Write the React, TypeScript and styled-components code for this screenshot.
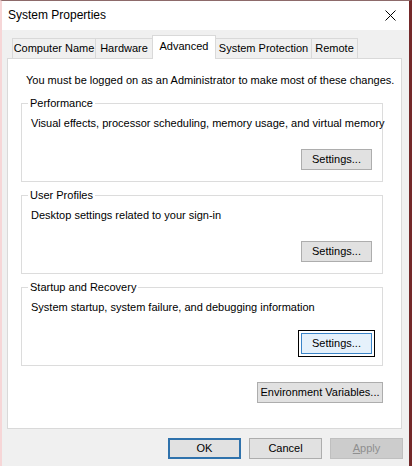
import React from 'react';
import styled, { createGlobalStyle, css } from 'styled-components';

const GlobalStyle = createGlobalStyle`
  html, body {
    margin: 0;
    padding: 0;
    background: #f0f0f0;
  }
  body {
    font-family: 'Segoe UI', 'Liberation Sans', Arial, sans-serif;
    font-size: 11px;
    color: #000;
    white-space: nowrap;
  }
`;

const Window = styled.div`
  width: 412px;
  height: 466px;
  box-sizing: border-box;
  display: flex;
  flex-direction: column;
  background: #f0f0f0;
  border-top: 1px solid #8d6a6a;
  border-left: 2px solid #f6d6d7;
  border-right: 3px solid #74292a;
`;

const TitleBar = styled.div`
  height: 29px;
  flex: none;
  display: flex;
  align-items: center;
  justify-content: space-between;
  padding: 0 13px 0 6px;
  background: #fff;
`;

const Title = styled.span`
  font-size: 12px;
  line-height: 15px;
`;

const CloseIcon = () => (
  <svg width="11" height="11" viewBox="0 0 11 11">
    <path d="M0.5 0.5 L10.5 10.5 M10.5 0.5 L0.5 10.5" stroke="#000" strokeWidth="1" fill="none" />
  </svg>
);

const TabRow = styled.div`
  display: flex;
  align-items: flex-end;
  height: 22px;
  margin-top: 6px;
  padding-left: 11px;
  position: relative;
  z-index: 1;
`;

const Tab = styled.div<{ $w: number; $active?: boolean }>`
  box-sizing: border-box;
  width: ${(p) => p.$w}px;
  height: 20px;
  display: flex;
  align-items: center;
  justify-content: center;
  line-height: 15px;
  border: 1px solid #d9d9d9;
  border-bottom: none;
  margin-left: -1px;
  background: #f0f0f0;
  ${(p) =>
    p.$active &&
    css`
      height: 24px;
      margin-bottom: -1px;
      padding-bottom: 3px;
      background: #fff;
      position: relative;
      z-index: 2;
    `}
`;

const Panel = styled.div`
  box-sizing: border-box;
  height: 371px;
  flex: none;
  margin: 0 7px 0 5px;
  border: 1px solid #d9d9d9;
  background: #fff;
  display: flex;
  flex-direction: column;
  padding: 14px 0 0;
`;

const Notice = styled.div`
  line-height: 15px;
  padding-left: 18px;
  margin-bottom: 8px;
`;

const Group = styled.fieldset`
  margin: 0 18px 6px 13px;
  padding: 5px 10px 11px 9px;
  border: 1px solid #dcdcdc;
  min-width: 0;
`;

const Legend = styled.legend`
  padding: 0 2px;
  margin-left: -3px;
  line-height: 15px;
`;

const Description = styled.div`
  line-height: 15px;
`;

const ButtonRow = styled.div<{ $mt?: number; $pr?: number }>`
  display: flex;
  justify-content: flex-end;
  margin-top: ${(p) => p.$mt ?? 18}px;
  padding-right: ${(p) => p.$pr ?? 0}px;
`;

type Variant = 'normal' | 'focused' | 'default' | 'disabled';

const Button = styled.button<{ $w: number; $variant?: Variant }>`
  box-sizing: border-box;
  width: ${(p) => p.$w}px;
  height: 21px;
  padding: 0;
  font: inherit;
  line-height: 15px;
  white-space: nowrap;
  color: #000;
  background: #e1e1e1;
  border: 1px solid #adadad;
  ${(p) =>
    p.$variant === 'focused' &&
    css`
      background: #e5f1fb;
      border-color: #3a84c8;
      box-shadow: 0 0 0 2px #fff, 0 0 0 3px #000;
    `}
  ${(p) =>
    p.$variant === 'default' &&
    css`
      border: 2px solid #2f72ac;
    `}
  ${(p) =>
    p.$variant === 'disabled' &&
    css`
      background: #cccccc;
      border-color: #bfbfbf;
      color: #8f8f8f;
    `}
`;

const Footer = styled.div`
  display: flex;
  justify-content: flex-end;
  gap: 8px;
  margin: 9px 6px 0 0;
`;

const groups = [
  { title: 'Performance', text: 'Visual effects, processor scheduling, memory usage, and virtual memory' },
  { title: 'User Profiles', text: 'Desktop settings related to your sign-in' },
  { title: 'Startup and Recovery', text: 'System startup, system failure, and debugging information', focused: true },
];

const tabs = [
  { label: 'Computer Name', w: 84 },
  { label: 'Hardware', w: 58 },
  { label: 'Advanced', w: 64, active: true },
  { label: 'System Protection', w: 97 },
  { label: 'Remote', w: 47 },
];

export default function App() {
  return (
    <>
      <GlobalStyle />
      <Window>
        <TitleBar>
          <Title>System Properties</Title>
          <CloseIcon />
        </TitleBar>
        <TabRow>
          {tabs.map((t) => (
            <Tab key={t.label} $w={t.w} $active={t.active}>
              {t.label}
            </Tab>
          ))}
        </TabRow>
        <Panel>
          <Notice>You must be logged on as an Administrator to make most of these changes.</Notice>
          {groups.map((g) => (
            <Group key={g.title}>
              <Legend>{g.title}</Legend>
              <Description>{g.text}</Description>
              <ButtonRow>
                <Button $w={71} $variant={g.focused ? 'focused' : 'normal'}>
                  Settings...
                </Button>
              </ButtonRow>
            </Group>
          ))}
          <ButtonRow $mt={10} $pr={18}>
            <Button $w={126}>Environment Variables...</Button>
          </ButtonRow>
        </Panel>
        <Footer>
          <Button $w={73} $variant="default">OK</Button>
          <Button $w={73}>Cancel</Button>
          <Button $w={73} $variant="disabled">
            <u>A</u>pply
          </Button>
        </Footer>
      </Window>
    </>
  );
}
